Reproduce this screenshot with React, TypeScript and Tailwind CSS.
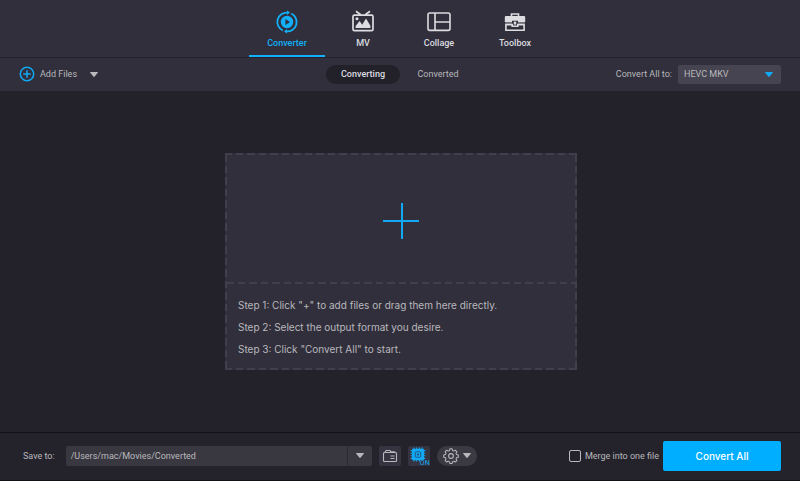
import { useState } from 'react';
import type { ReactNode } from 'react';

interface Tab {
  id: string;
  label: string;
  icon: ReactNode;
}

function Caret({ className }: { className: string }) {
  return (
    <svg viewBox="0 0 8 5" className={className} fill="currentColor" aria-hidden="true">
      <path d="M0.6 0h6.8a.5.5 0 0 1 .4.8L4.4 4.7a.5.5 0 0 1-.8 0L.2.8A.5.5 0 0 1 .6 0z" />
    </svg>
  );
}

function ConverterIcon() {
  return (
    <svg viewBox="0 0 24 24" className="size-6" fill="none" stroke="currentColor" strokeWidth="1.8" aria-hidden="true">
      <path d="M7.8 20.5A9.4 9.4 0 0 1 12.6 2.6" />
      <path d="M16.2 3.5A9.4 9.4 0 0 1 11.4 21.4" />
      <path d="M12 .4l3 2.2-3 2.300zM12 23.600l-3-2.200 3-2.300z" fill="currentColor" stroke="none" />
      <path
        d="M12 5.800a6.200 6.200 0 1 1 0 12.400 6.200 6.200 0 0 1 0-12.400zm-1.600 3.300v5.800l4.600-2.900z"
        fill="currentColor"
        fillRule="evenodd"
        stroke="none"
      />
    </svg>
  );
}

function MvIcon() {
  return (
    <svg viewBox="0 0 24 24" className="size-6" fill="none" stroke="currentColor" strokeWidth="1.700" aria-hidden="true">
      <rect x="2" y="5.200" width="20" height="15.400" rx="1.400" />
      <path d="M5 1.200l5 3.800M19 1.200l-5 3.800" />
      <path d="M4.600 18v-2l4-5 2.600 3.800L15 8.600l4.400 7.200V18z" fill="currentColor" stroke="none" />
      <circle cx="6" cy="8.800" r="1.500" fill="currentColor" stroke="none" />
    </svg>
  );
}

function CollageIcon() {
  return (
    <svg viewBox="0 0 24 24" className="size-6" fill="none" stroke="currentColor" strokeWidth="1.600" aria-hidden="true">
      <rect x="1" y="3" width="22" height="17.400" rx="1.800" />
      <path d="M8 3v17.400M8 12h15" />
    </svg>
  );
}

function ToolboxIcon() {
  return (
    <svg viewBox="0 0 24 24" className="size-6" aria-hidden="true">
      <path d="M8.500 6.800V4h7v2.800" fill="none" stroke="currentColor" strokeWidth="1.600" />
      <path d="M3 6h18a1.200 1.200 0 0 1 1.200 1.200V12H15v-1.200H9V12H1.800V7.200A1.200 1.200 0 0 1 3 6z" fill="currentColor" />
      <path d="M2.200 12H9v1.800H2.200zM15 12h6.800v1.800H15z" fill="currentColor" opacity="0.400" />
      <rect x="10.800" y="11.600" width="2.400" height="3" fill="currentColor" />
      <path d="M2.900 14.600v5.600h18.200v-5.600H14.800v1.600H9.200v-1.600z" fill="none" stroke="currentColor" strokeWidth="1.600" />
    </svg>
  );
}

function FolderIcon() {
  return (
    <svg viewBox="0 0 16 16" className="size-4" fill="none" stroke="currentColor" strokeWidth="1.100" aria-hidden="true">
      <path d="M3 4.500l1-2h4l.7 1.200h3.800l.7 1" />
      <rect x="1.500" y="4.500" width="13" height="9" rx="1" />
      <path d="M8.500 8h4M8.500 10.500h4" />
    </svg>
  );
}

function ChipIcon() {
  return (
    <svg viewBox="0 0 20 20" className="size-5" aria-hidden="true">
      <rect x="3" y="2.800" width="12" height="11.400" rx="1" fill="currentColor" />
      <path
        d="M5 1.500v14M7.700 1.500v14M10.400 1.500v14M13 1.500v14M1.700 4.600h14.600M1.700 7.200h14.600M1.700 9.800h14.600M1.700 12.400h14.600"
        stroke="currentColor"
        strokeWidth="1.100"
      />
      <rect x="6.300" y="5.800" width="5.400" height="5.400" rx="0.800" fill="none" stroke="#24486a" strokeWidth="0.800" />
      <circle cx="9" cy="8.500" r="1" fill="#24486a" />
    </svg>
  );
}

function GearIcon() {
  return (
    <svg viewBox="0 0 24 24" className="size-4" fill="none" stroke="currentColor" strokeWidth="1.600" aria-hidden="true">
      <path
        strokeLinejoin="round"
        d="M10.200 1.500h3.600l.6 2.800 2 .8 2.400-1.500 2.600 2.600-1.500 2.400.8 2 2.800.6v3.600l-2.800.6-.8 2 1.500 2.400-2.600 2.600-2.400-1.500-2 .8-.6 2.800h-3.600l-.6-2.800-2-.8-2.400 1.500-2.600-2.600 1.500-2.400-.8-2-2.800-.6v-3.600l2.800-.6.8-2-1.500-2.400 2.600-2.600 2.400 1.500 2-.8z"
        transform="translate(0.600 -0.200) scale(0.950)"
      />
      <circle cx="12" cy="12" r="3.600" />
    </svg>
  );
}

const tabs: Tab[] = [
  { id: 'converter', label: 'Converter', icon: <ConverterIcon /> },
  { id: 'mv', label: 'MV', icon: <MvIcon /> },
  { id: 'collage', label: 'Collage', icon: <CollageIcon /> },
  { id: 'toolbox', label: 'Toolbox', icon: <ToolboxIcon /> },
];

const steps = [
  'Step 1: Click "+" to add files or drag them here directly.',
  'Step 2: Select the output format you desire.',
  'Step 3: Click "Convert All" to start.',
];

// Dashed rules share one 23px rhythm so the corners line up
function RowDash() {
  return (
    <div className="h-[2px] shrink-0 bg-[repeating-linear-gradient(90deg,#403f4b_0px,#403f4b_7px,transparent_7px,transparent_11px,#403f4b_11px,#403f4b_18px,transparent_18px,transparent_22px,#403f4b_22px,#403f4b_23px)]" />
  );
}

function ColumnDash() {
  return (
    <div className="w-[2px] shrink-0 bg-[repeating-linear-gradient(180deg,#403f4b_0px,#403f4b_7px,transparent_7px,transparent_11px,#403f4b_11px,#403f4b_18px,transparent_18px,transparent_22px,#403f4b_22px,#403f4b_23px)]" />
  );
}

export default function App() {
  const [activeTab, setActiveTab] = useState('converter');
  const [view, setView] = useState('converting');
  const [format, setFormat] = useState('HEVC MKV');
  const [path, setPath] = useState('/Users/mac/Movies/Converted');
  const [merge, setMerge] = useState(false);

  return (
    <div className="flex min-h-screen flex-col bg-[#23222b] font-['Roboto','Inter',sans-serif] text-[9px] leading-4 text-[#b9b8bd]">
      {/* Main tabs */}
      <header className="border-b border-[#24232c] bg-[#302f3b]">
        <nav className="flex justify-center pl-0.5">
          {tabs.map((tab) => (
            <button
              key={tab.id}
              onClick={() => setActiveTab(tab.id)}
              className={`flex h-[57px] w-[76px] flex-col items-center border-b-2 pt-2.5 font-medium ${
                activeTab === tab.id ? 'border-[#12b0f8] text-[#12b0f8]' : 'border-transparent text-[#dddce0]'
              }`}
            >
              {tab.icon}
              <span className="pt-px">{tab.label}</span>
            </button>
          ))}
        </nav>
      </header>

      {/* Toolbar */}
      <div className="grid h-[33px] grid-cols-[1fr_auto_1fr] items-center bg-[#302f3b] px-[19px] pb-px">
        <div className="flex items-center">
          <button className="flex items-center gap-[5px]">
            <svg viewBox="0 0 16 16" className="size-4 text-[#12a9f4]" fill="none" stroke="currentColor" strokeWidth="1.500" aria-hidden="true">
              <circle cx="8" cy="8" r="6.700" />
              <path d="M8 4.300v7.400M4.300 8h7.400" />
            </svg>
            Add Files
          </button>
          <button aria-label="More ways to add files" className="ml-3 p-px pt-0.5">
            <Caret className="h-[5px] w-2" />
          </button>
        </div>
        <div className="flex pl-0.5">
          <button
            onClick={() => setView('converting')}
            className={`h-[19px] w-[74px] rounded-full ${view === 'converting' ? 'bg-[#22212a] font-medium text-[#dddce0]' : ''}`}
          >
            Converting
          </button>
          <button
            onClick={() => setView('converted')}
            className={`h-[19px] w-[76px] rounded-full ${view === 'converted' ? 'bg-[#22212a] font-medium text-[#dddce0]' : ''}`}
          >
            Converted
          </button>
        </div>
        <div className="flex items-center justify-end gap-1.5">
          <label htmlFor="format">Convert All to:</label>
          <div className="relative flex">
            <select
              id="format"
              value={format}
              onChange={(e) => setFormat(e.target.value)}
              className="h-[19px] w-[103px] appearance-none rounded-xs bg-[#454450] pl-1.5 outline-none"
            >
              <option>HEVC MKV</option>
            </select>
            <Caret className="pointer-events-none absolute top-[7px] right-2 h-[5px] w-2 text-[#12a9f4]" />
          </div>
        </div>
      </div>

      {/* Drop area */}
      <main className="flex flex-1 items-center justify-center py-4 pl-0.5">
        <section className="flex w-[352px] flex-col bg-[#312f3b]">
          <RowDash />
          <div className="flex">
            <ColumnDash />
            <div className="flex flex-1 flex-col">
              <button aria-label="Add files" className="flex h-[127px] items-center justify-center pt-1">
                <svg viewBox="0 0 36 36" className="size-9" stroke="#12a9f4" strokeWidth="2" aria-hidden="true">
                  <path d="M19 0v36M0 18h36" />
                </svg>
              </button>
              <RowDash />
              <ol className="flex flex-col gap-1.5 px-[11px] pt-[13px] pb-[11px] font-['Inter','Liberation_Sans',sans-serif] text-[10px]">
                {steps.map((step) => (
                  <li key={step}>{step}</li>
                ))}
              </ol>
            </div>
            <ColumnDash />
          </div>
          <RowDash />
        </section>
      </main>

      {/* Output bar */}
      <footer className="flex h-[49px] items-center border-y border-[#121117] bg-[#24232b] pr-[19px] pb-0.5 pl-[23px]">
        <label htmlFor="path" className="mr-[11px]">Save to:</label>
        <div className="flex h-5 w-[306px] overflow-hidden rounded-xs bg-[#393841]">
          <input
            id="path"
            value={path}
            onChange={(e) => setPath(e.target.value)}
            className="min-w-0 flex-1 bg-transparent pl-[5px] outline-none"
          />
          <button aria-label="Recent folders" className="flex w-[25px] items-center justify-center border-l border-[#2a2931]">
            <Caret className="h-[5px] w-2" />
          </button>
        </div>
        <button aria-label="Open folder" className="ml-[7px] flex h-5 w-[22px] items-center justify-center rounded-xs bg-[#353440]">
          <FolderIcon />
        </button>
        <button aria-label="Hardware acceleration" className="relative ml-[7px] flex h-5 w-[22px] items-center justify-center rounded-xs bg-[#353440] text-[#12a9f4]">
          <ChipIcon />
          <span className="absolute right-0 bottom-0 bg-[#353440] text-[7px] leading-[6px]">ON</span>
        </button>
        <button aria-label="Settings" className="ml-[7px] flex h-5 w-10 items-center justify-center gap-1 rounded-full bg-[#3b3a43]">
          <GearIcon />
          <Caret className="h-[5px] w-2" />
        </button>
        <label className="ml-auto flex items-center gap-1">
          <input
            type="checkbox"
            checked={merge}
            onChange={(e) => setMerge(e.target.checked)}
            className="size-3 appearance-none rounded-xs border border-[#b9b8bd] checked:bg-[#12a9f4]"
          />
          Merge into one file
        </label>
        <button className="ml-1 h-[30px] w-[118px] rounded-xs bg-[#00aeff] font-['Inter','Liberation_Sans',sans-serif] text-[10px] font-medium text-white">
          Convert All
        </button>
      </footer>
    </div>
  );
}
